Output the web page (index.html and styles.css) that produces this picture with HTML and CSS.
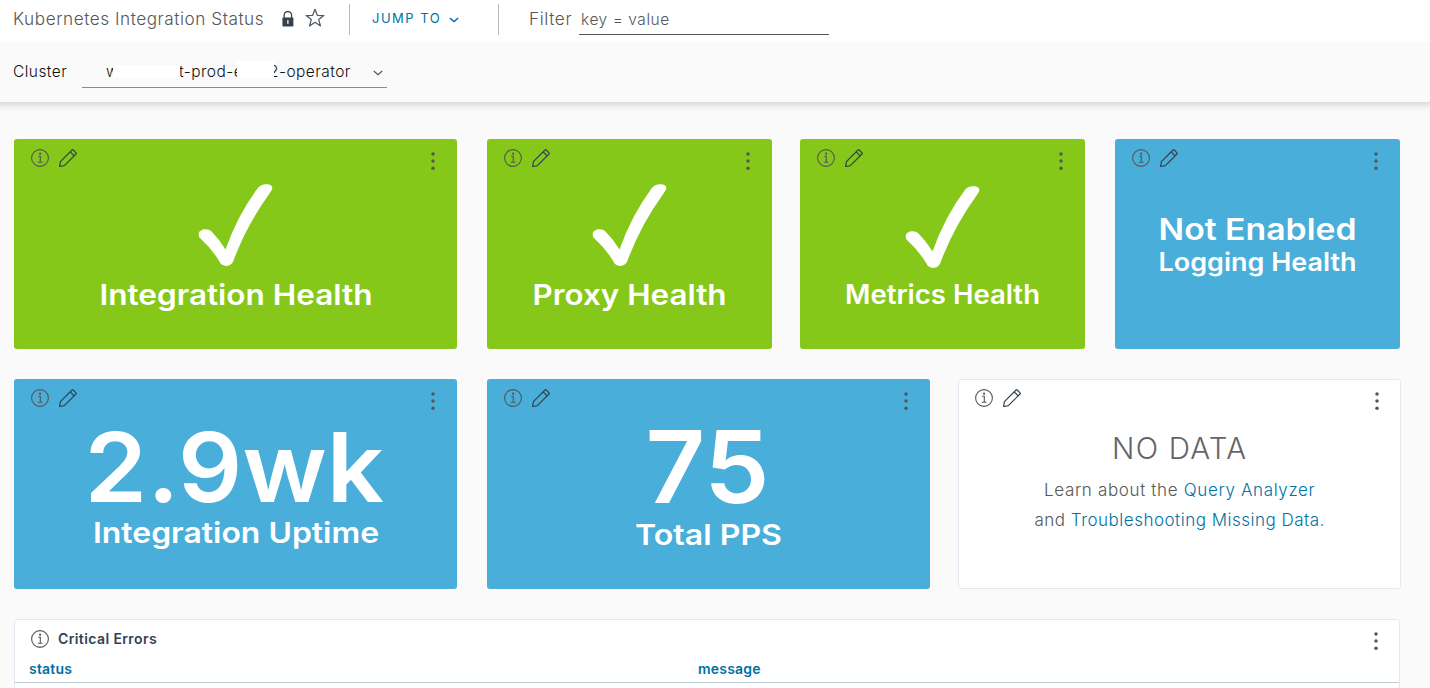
FILE: index.html
```html
<!DOCTYPE html>
<html lang="en">
<head>
<meta charset="utf-8">
<title>Kubernetes Integration Status</title>
<link rel="stylesheet" href="styles.css">
</head>
<body>
<svg class="defs" aria-hidden="true">
  <symbol id="info" viewBox="0 0 18 18"><g fill="none" stroke="currentColor"><circle cx="9" cy="9" r="8.4" stroke-width="1.1"/><path d="M7.2 7.3H9.3V13.2M6.8 13.3H11.6" stroke-width="1.1"/></g><circle cx="9.1" cy="4.7" r="1.1" fill="currentColor"/></symbol>
  <symbol id="pencil" viewBox="0 0 18 18"><path d="M.6 17.4 1.4 12.6 13 1Q13.6.4 14.2 1L17 3.8Q17.6 4.4 17 5L5.6 16.4Q4.8 17.2.6 17.4ZM11.2 2.9 15.1 6.8" fill="none" stroke="currentColor" stroke-width="1.2" stroke-linejoin="round"/></symbol>
  <symbol id="dots" viewBox="0 0 4 18"><g fill="currentColor"><circle cx="2" cy="2" r="1.75"/><circle cx="2" cy="9" r="1.75"/><circle cx="2" cy="16.2" r="1.75"/></g></symbol>
  <symbol id="check" viewBox="0 0 74 83"><path d="M0 51C0 46 9 44 13 48Q21 56 27 66Q39 32 59 5C62 0 74-1 74 5Q73 7 71 10Q48 42 35 77C33 84 23 84 21 78Q13 65 2 55Q0 53 0 51Z" fill="#fff"/></symbol>
</svg>
<header class="topbar">
  <h1 class="title">Kubernetes Integration Status</h1>
  <svg class="lock" viewBox="0 0 12 16"><path d="M2.2 7V4.2a3.7 3.7 0 0 1 7.4 0V7" fill="none" stroke="#314351" stroke-width="1.3"/><rect x=".4" y="6.4" width="11" height="9.2" rx="1" fill="#314351"/><path d="M5.9 9.4v3" stroke="#fff" stroke-width="1.2" stroke-linecap="round"/></svg>
  <svg class="star" viewBox="0 0 20 20"><path d="M10 1.3 12.3 7.3 18.9 7.6 13.7 11.6 15.5 18 10 14.3 4.5 18 6.3 11.6 1.1 7.6 7.7 7.3Z" fill="none" stroke="#455966" stroke-width="1.2" stroke-linejoin="round"/></svg>
  <div class="jump"><span>JUMP TO</span><svg class="caret" viewBox="0 0 10 6"><path d="M.8 1 5 4.6 9.2 1" fill="none" stroke="currentColor" stroke-width="1.5"/></svg></div>
  <div class="filter"><span class="filter-label">Filter</span><span class="filter-input">key = value</span></div>
</header>
<section class="params">
  <span class="param-label">Cluster</span>
  <div class="select">
    <span class="seg seg-w">w</span><span class="mask mask-a"></span><span class="seg seg-mid"><i>t-prod-e</i></span><span class="mask mask-b"></span><span class="seg seg-end"><i>2-operator</i></span>
    <svg class="caret" viewBox="0 0 10 6"><path d="M.8 1 5 4.8 9.2 1" fill="none" stroke="currentColor" stroke-width="1.2"/></svg>
  </div>
</section>
<main class="board">
  <div class="row">
    <article class="card wide green">
      <div class="tools"><svg class="info"><use href="#info"/></svg><svg class="pencil"><use href="#pencil"/></svg><svg class="dots"><use href="#dots"/></svg></div>
      <svg class="stat" viewBox="0 0 443 170"><use href="#check" x="184.5" y="4.5" width="74" height="83"/><text x="85.5" y="126" font-size="29" textLength="273" lengthAdjust="spacingAndGlyphs">Integration Health</text></svg>
    </article>
    <article class="card narrow green">
      <div class="tools"><svg class="info"><use href="#info"/></svg><svg class="pencil"><use href="#pencil"/></svg><svg class="dots"><use href="#dots"/></svg></div>
      <svg class="stat" viewBox="0 0 285 170"><use href="#check" x="105.5" y="4.5" width="74" height="83"/><text x="45.5" y="126" font-size="29" textLength="194" lengthAdjust="spacingAndGlyphs">Proxy Health</text></svg>
    </article>
    <article class="card narrow green tight">
      <div class="tools"><svg class="info"><use href="#info"/></svg><svg class="pencil"><use href="#pencil"/></svg><svg class="dots"><use href="#dots"/></svg></div>
      <svg class="stat" viewBox="0 0 285 170"><use href="#check" x="105.5" y="6.5" width="74" height="83"/><text x="45" y="125" font-size="26.5" textLength="195" lengthAdjust="spacingAndGlyphs">Metrics Health</text></svg>
    </article>
    <article class="card narrow blue">
      <div class="tools"><svg class="info"><use href="#info"/></svg><svg class="pencil"><use href="#pencil"/></svg><svg class="dots"><use href="#dots"/></svg></div>
      <svg class="stat" viewBox="0 0 285 170"><text x="43.5" y="61" font-size="30" textLength="198" lengthAdjust="spacingAndGlyphs">Not Enabled</text><text x="43.5" y="92" font-size="25" textLength="198" lengthAdjust="spacingAndGlyphs">Logging Health</text></svg>
    </article>
  </div>
  <div class="row">
    <article class="card wide blue">
      <div class="tools"><svg class="info"><use href="#info"/></svg><svg class="pencil"><use href="#pencil"/></svg><svg class="dots"><use href="#dots"/></svg></div>
      <svg class="stat" viewBox="0 0 443 170"><text x="70.5" y="83" font-size="96" textLength="299.5" lengthAdjust="spacingAndGlyphs">2.9wk</text><text x="79" y="124" font-size="29" textLength="286" lengthAdjust="spacingAndGlyphs">Integration Uptime</text></svg>
    </article>
    <article class="card wide blue">
      <div class="tools"><svg class="info"><use href="#info"/></svg><svg class="pencil"><use href="#pencil"/></svg><svg class="dots"><use href="#dots"/></svg></div>
      <svg class="stat" viewBox="0 0 443 170"><text x="158.5" y="84" font-size="100" textLength="124" lengthAdjust="spacingAndGlyphs">75</text><text x="148" y="126" font-size="29" textLength="147" lengthAdjust="spacingAndGlyphs">Total PPS</text></svg>
    </article>
    <article class="card wide plain tight">
      <div class="tools"><svg class="info"><use href="#info"/></svg><svg class="pencil"><use href="#pencil"/></svg><svg class="dots"><use href="#dots"/></svg></div>
      <div class="empty">
        <h2>NO DATA</h2>
        <p class="l1">Learn about the <a>Query Analyzer</a></p>
        <p class="l2">and <a>Troubleshooting Missing Data.</a></p>
      </div>
    </article>
  </div>
  <section class="errors">
    <div class="errors-head"><svg class="info"><use href="#info"/></svg><h3>Critical Errors</h3><svg class="dots"><use href="#dots"/></svg></div>
    <div class="columns"><span class="status">status</span><span class="message">message</span></div>
  </section>
</main>
</body>
</html>
```

FILE: styles.css
```css
* { box-sizing: border-box; }
body { margin: 0; height: 688px; overflow: hidden; background: #fafafa; color: #565656; font-family: Inter, "Liberation Sans", sans-serif; }
h1, h2, h3, p { margin: 0; font-weight: 300; }
.defs { display: none; }
.topbar { display: flex; align-items: flex-start; height: 42px; background: #fff; padding-left: 13px; }
.title { width: 268.5px; font-size: 17.2px; line-height: 38px; letter-spacing: 0.54px; white-space: nowrap; }
.lock { width: 12px; height: 16px; margin-top: 11px; }
.star { width: 20px; height: 20px; margin: 8px 0 0 11.5px; }
.jump { display: flex; align-items: center; width: 150px; height: 31px; margin: 4px 0 0 24px; border: solid #b9b9b9; border-width: 0 1px; padding-left: 22px; color: #0072a3; font-size: 13px; letter-spacing: 1.5px; white-space: nowrap; }
.caret { width: 10px; height: 6px; flex: none; }
.jump .caret { margin: 1px 0 0 8px; }
.jump span { line-height: 27px; height: 30px; }
.filter { display: flex; }
.filter-label { width: 50px; margin-left: 30px; font-size: 17.2px; font-weight: 300; line-height: 38px; letter-spacing: 0.6px; }
.filter-input { width: 250px; height: 35px; border-bottom: 1px solid #565656; padding-left: 2px; font-size: 15.5px; font-weight: 300; line-height: 39px; letter-spacing: 0.55px; }
.params { display: flex; height: 60px; padding-left: 13px; color: #111; }
.param-label { width: 69px; font-size: 15.5px; font-weight: 300; line-height: 59px; letter-spacing: 0.45px; }
.select { display: flex; width: 305px; height: 46px; padding-left: 24px; border-bottom: 1px solid #8c8c8c; font-size: 15.5px; font-weight: 300; line-height: 59px; letter-spacing: 0.45px; }
.seg { height: 46px; overflow: hidden; white-space: nowrap; }
.seg i { font-style: normal; display: block; }
.seg-w { width: 7px; }
.seg-mid { width: 57px; }
.seg-mid i { margin-left: -1px; }
.seg-end { width: 79px; }
.seg-end i { margin-left: -5px; }
.mask { background: #fff; }
.mask-a { width: 67px; height: 13px; margin-top: 23px; }
.mask-b { width: 37px; height: 17px; margin-top: 19px; }
.select .caret { color: #565656; margin: 28px 0 0 20px; }
.board { padding: 37px 29px 0 14px; background: linear-gradient(#dadada, #e8e8e8 3px, #f4f4f4 6px, #fafafa 10px); }
.row { display: flex; height: 210px; margin-bottom: 30px; }
.card { height: 210px; border-radius: 3px; overflow: hidden; flex: none; }
.card + .card { margin-left: 29.5px; }
.card + .tight { margin-left: 28.7px; }
.wide { width: 443px; }
.narrow { width: 285px; }
.green { background: #85c81a; }
.blue { background: #49aeda; }
.plain { background: #fff; border: 1px solid #e3e8f0; }
.tools { display: flex; height: 40px; padding: 10px 22px 0 17px; color: #565656; }
.plain .tools { height: 39px; padding: 9px 21px 0 16px; }
.info, .pencil { width: 18px; height: 18px; flex: none; }
.pencil { margin-left: 10px; color: #314351; }
.dots { width: 4px; height: 18px; margin: 3px 0 0 auto; }
.stat { display: block; width: 100%; height: 170px; fill: #fff; font-weight: 600; }
.empty { text-align: center; white-space: nowrap; }
.empty h2 { height: 50px; font-size: 29.5px; line-height: 58px; letter-spacing: 1.2px; color: #66646a; }
.empty p { font-size: 17px; font-weight: 300; line-height: 30px; letter-spacing: 0.5px; height: 30px; padding-top: 6px; }
.empty .l1 { letter-spacing: 0.65px; }
.empty a { color: #0072a3; }
.errors { width: 1386px; height: 80px; background: #fff; border: 1px solid #e3e8f0; border-radius: 3px; }
.errors-head { display: flex; height: 34px; padding: 10px 21px 0 16px; }
.errors-head .dots { margin-top: 2px; }
.errors h3 { margin-left: 9px; font-size: 14px; font-weight: 600; line-height: 18px; letter-spacing: 0.4px; color: #314351; }
.columns { display: flex; height: 29px; padding-left: 14px; border-bottom: 1px solid #c1cdd4; color: #0072a3; font-size: 14px; font-weight: 600; line-height: 30px; letter-spacing: 0.2px; }
.status { width: 669px; }
```
